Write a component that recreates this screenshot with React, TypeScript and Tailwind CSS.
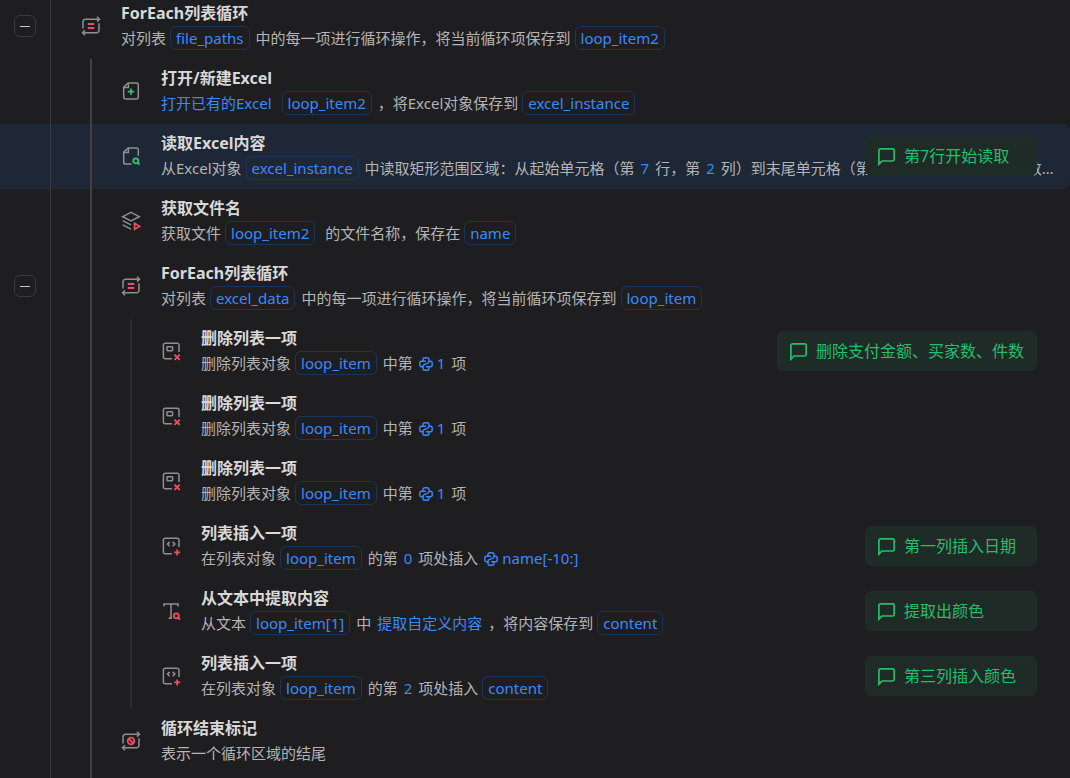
import type { ReactNode } from "react";
import clsx from "clsx";

type IconName = "loop" | "loopEnd" | "fileAdd" | "fileSearch" | "layers" | "listRemove" | "listInsert" | "textSearch";

type Step = {
  icon: IconName;
  title: string;
  level: number;
  body: ReactNode;
  comment?: string;
  collapsible?: boolean;
  selected?: boolean;
};

const ICONS: Record<IconName, ReactNode> = {
  loop: (
    <>
      <path d="M2 12.5V5.700a2.500 2.500 0 0 1 2.500-2.500H18" />
      <path d="M16 .8l2.500 2.400L16 5.600" />
      <path d="M18 7.200v7a2.500 2.500 0 0 1-2.500 2.500H2" />
      <path d="M4 14.300l-2.500 2.400L4 19.100" />
      <path d="M6.800 8h6.400M6.800 12h6.400" className="stroke-[#f04e5c]" strokeWidth="1.8" />
    </>
  ),
  loopEnd: (
    <>
      <path d="M2 12.5V5.700a2.500 2.500 0 0 1 2.500-2.500H18" />
      <path d="M16 .8l2.500 2.400L16 5.600" />
      <path d="M18 7.200v7a2.500 2.500 0 0 1-2.500 2.500H2" />
      <path d="M4 14.300l-2.500 2.400L4 19.100" />
      <circle cx="10" cy="10" r="3.3" className="stroke-[#f04e5c]" strokeWidth="1.8" />
      <path d="M7.800 7.800l4.400 4.400" className="stroke-[#f04e5c]" strokeWidth="1.8" />
    </>
  ),
  fileAdd: (
    <>
      <path d="M7.200 2h8.300a1.800 1.800 0 0 1 1.800 1.800v12.400a1.800 1.800 0 0 1-1.800 1.800h-11a1.800 1.800 0 0 1-1.800-1.800V6.200z" />
      <path d="M7.400 2.200v4.200H3" />
      <path d="M10 7.400v6.400M6.800 10.600h6.400" className="stroke-[#2bc574]" strokeWidth="1.8" />
    </>
  ),
  fileSearch: (
    <>
      <path d="M10.500 18h-6a1.800 1.800 0 0 1-1.800-1.800V6.200L7.200 2h8.300a1.800 1.800 0 0 1 1.800 1.800v6" />
      <path d="M7.400 2.200v4.200H3" />
      <circle cx="14.8" cy="14.8" r="2.5" className="stroke-[#2bc574]" strokeWidth="1.8" />
      <path d="M16.700 16.800l1.900 1.700" className="stroke-[#2bc574]" strokeWidth="1.8" />
    </>
  ),
  layers: (
    <>
      <path d="M10 1.400l8.300 4.300L10 10 1.700 5.700z" />
      <path d="M1.700 9.700l8.300 4.200M1.700 13.900l8.300 4.200" />
      <path d="M13.600 12.300v6l5-3z" className="stroke-[#f04e5c]" strokeWidth="1.7" />
    </>
  ),
  listRemove: (
    <>
      <path d="M11 17.800H4.200a1.800 1.800 0 0 1-1.800-1.800V4a1.800 1.800 0 0 1 1.800-1.800h12A1.800 1.800 0 0 1 18 4v7" />
      <rect x="6" y="5.700" width="5.600" height="4" rx="0.6" />
      <path d="M13.500 13.700l5.200 5.200M18.700 13.700l-5.200 5.200" className="stroke-[#f04e5c]" strokeWidth="1.9" />
    </>
  ),
  listInsert: (
    <>
      <path d="M11 17.800H4.200a1.800 1.800 0 0 1-1.800-1.800V4a1.800 1.800 0 0 1 1.800-1.800h12A1.800 1.800 0 0 1 18 4v7" />
      <path d="M8.700 5.900L6.500 8.100l2.200 2.200M11.700 5.900l2.200 2.200-2.200 2.200" />
      <path d="M16.200 13.400v6M13.200 16.400h6" className="stroke-[#f04e5c]" strokeWidth="1.8" />
    </>
  ),
  textSearch: (
    <>
      <path d="M3 5.600V3h14v2.600M10 3v14.300M7.600 17.300H11" />
      <circle cx="15.3" cy="14.8" r="2.5" className="stroke-[#f04e5c]" strokeWidth="1.8" />
      <path d="M17.200 16.800l1.900 1.700" className="stroke-[#f04e5c]" strokeWidth="1.8" />
    </>
  ),
};

function StepIcon({ name }: { name: IconName }) {
  return (
    <svg viewBox="0 0 20 20" className="mb-px size-5 shrink-0 fill-none stroke-[#8e8f92]" strokeWidth="1.5" aria-hidden="true">
      {ICONS[name]}
    </svg>
  );
}

function PythonIcon() {
  return (
    <svg viewBox="0 0 14 14" className="mr-1 inline-block size-3.5 fill-none stroke-[#3b89fb] align-[-2px]" strokeWidth="1.4" aria-hidden="true">
      <path d="M4 4.300V2.600C4 1.500 4.800.8 6 .8h2c1.200 0 2 .7 2 1.800v1.600c0 1-.4 1.500-1.200 1.900L5.200 7.700C4.400 8.100 4 8.700 4 9.500v.2H2.600C1.500 9.700.8 8.900.8 7.700V6.300c0-1.200.7-2 1.800-2H7" />
      <path d="M10 9.700v1.700c0 1.100-.8 1.800-2 1.800H6c-1.200 0-2-.7-2-1.800V9.500M10 4.300h1.400c1.100 0 1.800.8 1.800 2v1.400c0 1.200-.7 2-1.800 2H7" />
    </svg>
  );
}

function Var({ children }: { children: ReactNode }) {
  return (
    <span className="ml-1 mr-1.5 inline-block h-6 rounded-md border border-[#1b3558] px-[5px] leading-[22px] text-[#3b89fb]">
      {children}
    </span>
  );
}

function Value({ children }: { children: ReactNode }) {
  return <span className="mx-1.5 text-[#3b89fb]">{children}</span>;
}

const removeItem = (
  <>
    删除列表对象<Var>loop_item</Var>中第<Value><PythonIcon />1</Value>项
  </>
);

const STEPS: Step[] = [
  {
    icon: "loop",
    title: "ForEach列表循环",
    level: 0,
    collapsible: true,
    body: <>对列表<Var>file_paths</Var>中的每一项进行循环操作，将当前循环项保存到<Var>loop_item2</Var></>,
  },
  {
    icon: "fileAdd",
    title: "打开/新建Excel",
    level: 1,
    body: (
      <>
        <span className="mr-1.5 text-[#3b89fb]">打开已有的Excel</span>
        <Var>loop_item2</Var>，将Excel对象保存到<Var>excel_instance</Var>
      </>
    ),
  },
  {
    icon: "fileSearch",
    title: "读取Excel内容",
    level: 1,
    selected: true,
    comment: "第7行开始读取",
    body: (
      <>
        从Excel对象<Var>excel_instance</Var>中读取矩形范围区域：从起始单元格（第<Value>7</Value>行，第<Value>2</Value>列）到末尾单元格（第
        <Value>10</Value>行，第<Value>10</Value>列），将数据保存到<Var>excel_data</Var>
      </>
    ),
  },
  {
    icon: "layers",
    title: "获取文件名",
    level: 1,
    body: <>获取文件<Var>loop_item2</Var> 的文件名称，保存在<Var>name</Var></>,
  },
  {
    icon: "loop",
    title: "ForEach列表循环",
    level: 1,
    collapsible: true,
    body: <>对列表<Var>excel_data</Var>中的每一项进行循环操作，将当前循环项保存到<Var>loop_item</Var></>,
  },
  { icon: "listRemove", title: "删除列表一项", level: 2, body: removeItem, comment: "删除支付金额、买家数、件数" },
  { icon: "listRemove", title: "删除列表一项", level: 2, body: removeItem },
  { icon: "listRemove", title: "删除列表一项", level: 2, body: removeItem },
  {
    icon: "listInsert",
    title: "列表插入一项",
    level: 2,
    comment: "第一列插入日期",
    body: <>在列表对象<Var>loop_item</Var>的第<Value>0</Value>项处插入<Value><PythonIcon />name[-10:]</Value></>,
  },
  {
    icon: "textSearch",
    title: "从文本中提取内容",
    level: 2,
    comment: "提取出颜色",
    body: <>从文本<Var>loop_item[1]</Var>中<Value>提取自定义内容</Value>，将内容保存到<Var>content</Var></>,
  },
  {
    icon: "listInsert",
    title: "列表插入一项",
    level: 2,
    comment: "第三列插入颜色",
    body: <>在列表对象<Var>loop_item</Var>的第<Value>2</Value>项处插入<Var>content</Var></>,
  },
  { icon: "loopEnd", title: "循环结束标记", level: 1, body: "表示一个循环区域的结尾" },
];

function Guides({ level }: { level: number }) {
  return Array.from({ length: level }, (_, i) => (
    <div key={i} className="w-10 shrink-0 self-stretch pl-[9px]">
      <div className={clsx("h-full w-0.5", i === 0 ? "bg-[#414144]" : "bg-[#2c2c2e]")} />
    </div>
  ));
}

function Comment({ text }: { text: string }) {
  return (
    <div className="absolute right-[33px] top-3 flex h-10 min-w-43 items-center rounded-md border border-[#1c2f28] bg-[#1e2b27] px-3 text-base text-[#28bd6c]">
      <svg viewBox="0 0 20 20" className="mr-1.5 size-5 shrink-0 fill-none stroke-current" strokeWidth="1.7" aria-hidden="true">
        <path d="M.9 18.200V4.300A1.500 1.500 0 0 1 2.400 2.800h12.300a1.500 1.500 0 0 1 1.500 1.500v9.200a1.500 1.500 0 0 1-1.500 1.500H4z" />
      </svg>
      <span className="whitespace-nowrap">{text}</span>
    </div>
  );
}

function StepRow({ step }: { step: Step }) {
  return (
    <li className={clsx("relative flex items-stretch", step.selected && "rounded-r-lg bg-[#1e2735]")}>
      <div className="flex w-[51px] shrink-0 items-center justify-center border-r border-[#3a3a3d]">
        {step.collapsible && (
          <button
            type="button"
            aria-label="收起"
            className="mb-px flex size-[22px] items-center justify-center rounded-md border border-[#39393b] hover:bg-white/5"
          >
            <span className="h-px w-2.5 bg-[#c4c4c4]" />
          </button>
        )}
      </div>
      <div className="flex min-w-0 flex-1 items-center pl-[30px] pr-3.5">
        <Guides level={step.level} />
        <StepIcon name={step.icon} />
        <div className="min-w-0 flex-1 pb-2 pl-5 pt-[7px]">
          <h3 className="truncate text-base/6 font-bold text-[#d8d8d8]">{step.title}</h3>
          <p className="truncate text-[15px]/[26px] text-[#b4b4b5]">{step.body}</p>
        </div>
      </div>
      {step.comment && <Comment text={step.comment} />}
    </li>
  );
}

export default function App() {
  return (
    <main className="flex h-screen flex-col overflow-hidden bg-[#1e1e20] font-['Noto_Sans','Noto_Sans_CJK_SC',sans-serif]">
      <ol className="-mt-1.5">
        {STEPS.map((step, i) => (
          <StepRow key={i} step={step} />
        ))}
      </ol>
      <div className="flex flex-1">
        <div className="w-[51px] border-r border-[#3a3a3d]" />
        <div className="flex pl-[30px]">
          <Guides level={1} />
        </div>
      </div>
    </main>
  );
}
